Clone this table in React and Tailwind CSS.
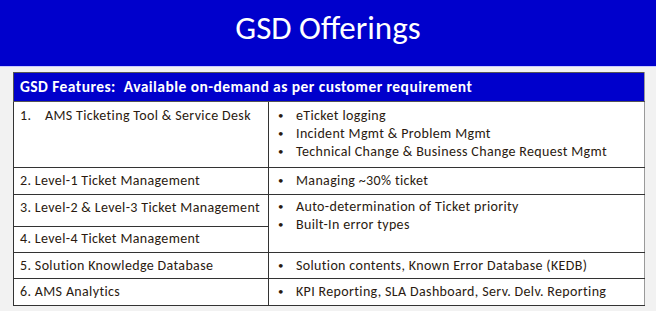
export default function App() {
  const font = { fontFamily: 'Carlito, Calibri, Lato, "Open Sans", sans-serif' };
  const Bullets = ({ items }) => (
    <div className="flex flex-col">
      {items.map((t) => (
        <div key={t} className="flex h-[18px] items-center">
          <span className="w-[25px] pl-[7px] text-[11px] tracking-normal">•</span>
          <span>{t}</span>
        </div>
      ))}
    </div>
  );
  const tdL = "border border-[#333] pl-[6px] pr-0 align-top whitespace-nowrap";
  const tdR = "border border-[#333] border-r-[#9a9a9a] pl-[2px] align-top whitespace-nowrap";
  return (
    <div className="w-[656px] h-[311px] bg-[#f2f2f2] overflow-hidden" style={font}>
      <div className="h-[67px] bg-[#0000cc] border-b border-[#c8c8ff] flex justify-center">
        <h1 className="text-white text-[33px] leading-[40px] mt-[8px]">GSD Offerings</h1>
      </div>
      <div className="pl-[13px] pt-[5px]">
        <table className="w-[631px] table-fixed border-collapse text-[14px] tracking-[0.35px] text-[#2a1a10] leading-[18px]">
          <colgroup>
            <col className="w-[255px]" />
            <col className="w-[376px]" />
          </colgroup>
          <tbody>
            <tr className="h-[29px]">
              <td colSpan={2} className="bg-[#0000cc] border border-[#555] border-r-[#9a9a9a] px-[6px] text-white font-bold text-[15.5px] tracking-[0.45px] align-middle whitespace-nowrap">
                GSD Features:&nbsp; Available on-demand as per customer requirement
              </td>
            </tr>
            <tr className="h-[66px] bg-white">
              <td className={tdL + " pt-[5px]"}>
                <span className="inline-block w-[25px]">1.</span>AMS Ticketing Tool &amp; Service Desk
              </td>
              <td className={tdR + " pt-[5px]"}>
                <Bullets items={["eTicket logging", "Incident Mgmt & Problem Mgmt", "Technical Change & Business Change Request Mgmt"]} />
              </td>
            </tr>
            <tr className="h-[27px] bg-white">
              <td className={tdL + " pt-[4px]"}>2. Level-1 Ticket Management</td>
              <td className={tdR + " pt-[4px]"}>
                <Bullets items={["Managing ~30% ticket"]} />
              </td>
            </tr>
            <tr className="h-[32px] bg-white">
              <td className={tdL + " pt-[4px]"}>3. Level-2 &amp; Level-3 Ticket Management</td>
              <td rowSpan={2} className={tdR + " pt-[3px]"}>
                <Bullets items={["Auto-determination of Ticket priority", "Built-In error types"]} />
              </td>
            </tr>
            <tr className="h-[26px] bg-white">
              <td className={tdL + " pt-[3px]"}>4. Level-4 Ticket Management</td>
            </tr>
            <tr className="h-[26px] bg-white">
              <td className={tdL + " pt-[4px]"}>5. Solution Knowledge Database</td>
              <td className={tdR + " pt-[4px]"}>
                <Bullets items={["Solution contents, Known Error Database (KEDB)"]} />
              </td>
            </tr>
            <tr className="h-[27px] bg-white">
              <td className={tdL + " pt-[4px]"}>6. AMS Analytics</td>
              <td className={tdR + " pt-[4px]"}>
                <Bullets items={["KPI Reporting, SLA Dashboard, Serv. Delv. Reporting"]} />
              </td>
            </tr>
          </tbody>
        </table>
      </div>
    </div>
  );
}
